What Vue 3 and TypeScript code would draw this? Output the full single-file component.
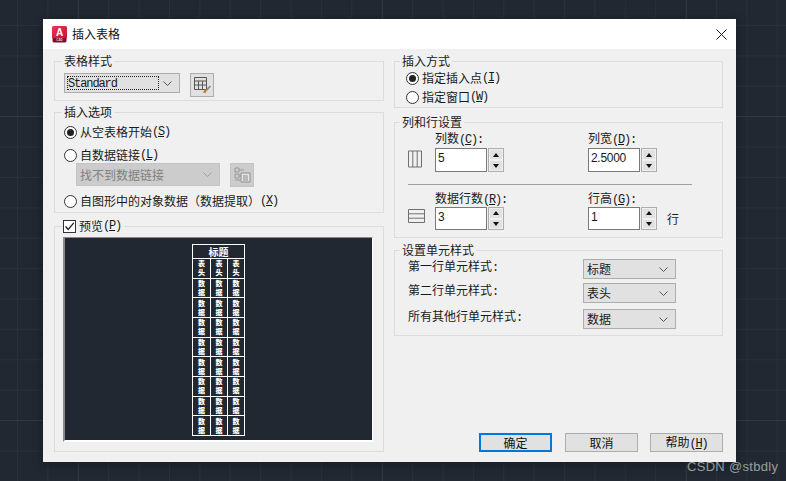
<script setup lang="ts">
interface Row { label: string; text: string }
const rows: Row[] = [
  { label: 'h', text: '表头' },
  ...Array.from({ length: 8 }, (_, i): Row => ({ label: 'd' + i, text: '数据' })),
]
const cellStyles = [
  { title: '第一行单元样式', value: '标题' },
  { title: '第二行单元样式', value: '表头' },
  { title: '所有其他行单元样式', value: '数据' },
]
</script>

<template>
  <div class="canvas">
    <div class="dialog">
      <header class="titlebar">
        <svg class="logo" width="15" height="17" viewBox="0 0 15 17">
          <defs>
            <linearGradient id="lg" x1="0" y1="0" x2="1" y2="1">
              <stop offset="0" stop-color="#f0324f" />
              <stop offset="1" stop-color="#c9123a" />
            </linearGradient>
          </defs>
          <path d="M0 1.5 Q0 0 1.5 0 H13.5 Q15 0 15 1.5 V12 H0Z" fill="url(#lg)" />
          <path d="M0.5 12 H14.5 V15 Q14.5 16.5 13 16.5 H2 Q0.5 16.5 0.5 15Z" fill="#7c1030" />
          <text x="7.5" y="10" text-anchor="middle" font-size="10" font-weight="700" fill="#fff" font-family="Liberation Sans, sans-serif">A</text>
          <text x="7.5" y="15.3" text-anchor="middle" font-size="3" font-weight="700" fill="#f3c9d2" font-family="Liberation Sans, sans-serif">CAD</text>
        </svg>
        <span class="title">插入表格</span>
        <svg class="close" width="11" height="11" viewBox="0 0 11 11">
          <path d="M0.5 0.5 L10.5 10.5 M10.5 0.5 L0.5 10.5" stroke="#1a1a1a" stroke-width="1" fill="none" />
        </svg>
      </header>

      <div class="body">
        <div class="col">
          <section class="group g-style">
            <div class="legend">表格样式</div>
            <div class="style-row">
              <div class="combo c-style">
                <span class="focus"><span class="m std">Standard</span></span>
                <svg class="chev" width="9" height="5" viewBox="0 0 9 5"><path d="M0.5 0.5 L4.5 4.5 L8.5 0.5" fill="none" stroke="#555" /></svg>
              </div>
              <button class="iconbtn">
                <svg width="20" height="20" viewBox="0 0 20 20">
                  <path d="M2.5 2.5 H14.5 V14.5 H2.5 Z M2.5 6 H14.5 M2.5 10 H14.5 M6.5 6 V14.5 M10.5 6 V14.5" fill="none" stroke="#555" />
                  <path d="M11 17.5 L13 14 L15 15.5 L13.5 18 Z" fill="#c47a2a" />
                  <path d="M14 14 L18 10.5 L19 11.5 L15.5 15.5 Z" fill="#8a8a8a" />
                </svg>
              </button>
            </div>
          </section>

          <section class="group g-insert">
            <div class="legend">插入选项</div>
            <label class="radio-row"><span class="radio on"></span>从空表格开始<span class="m">(<u>S</u>)</span></label>
            <label class="radio-row r2"><span class="radio"></span>自数据链接<span class="m">(<u>L</u>)</span></label>
            <div class="link-row">
              <div class="combo disabled c-link">
                <span>找不到数据链接</span>
                <svg class="chev" width="9" height="5" viewBox="0 0 9 5"><path d="M0.5 0.5 L4.5 4.5 L8.5 0.5" fill="none" stroke="#a0a0a0" /></svg>
              </div>
              <button class="iconbtn dis">
                <svg width="20" height="20" viewBox="0 0 20 20">
                  <path d="M3 3 H7 V7 H3 Z M3 9 H7 V13 H3 Z M7 5 H12 M7 11 H9 M3 15 H8" fill="none" stroke="#9a9a9a" />
                  <path d="M9 8 H18 V17 H9 Z" fill="#e4e4e4" stroke="#8e8e8e" />
                  <path d="M11 11 H16 M11 13 H16 M11 15 H16" stroke="#8e8e8e" />
                </svg>
              </button>
            </div>
            <label class="radio-row r3"><span class="radio"></span>自图形中的对象数据（数据提取）<span class="m">(<u>X</u>)</span></label>
          </section>

          <section class="group g-preview">
            <div class="legend check-legend">
              <span class="checkbox">
                <svg width="11" height="11" viewBox="0 0 11 11"><path d="M1.5 5.5 L4.2 8.5 L9.8 1.8" fill="none" stroke="#222" stroke-width="1.3" /></svg>
              </span>
              预览<span class="m">(<u>P</u>)</span>
            </div>
            <div class="preview">
              <div class="table">
                <div class="t-title">标题</div>
                <div v-for="row in rows" :key="row.label" class="t-row">
                  <div v-for="n in 3" :key="n" class="t-cell"><span class="t-text">{{ row.text }}</span></div>
                </div>
              </div>
            </div>
          </section>
        </div>

        <div class="col">
          <section class="group g-method">
            <div class="legend r-legend">插入方式</div>
            <label class="radio-row"><span class="radio on"></span>指定插入点<span class="m">(<u>I</u>)</span></label>
            <label class="radio-row m3"><span class="radio"></span>指定窗口<span class="m">(<u>W</u>)</span></label>
          </section>

          <section class="group g-rows">
            <div class="legend r-legend">列和行设置</div>
            <div class="spin-row">
              <div class="glyph">
                <svg width="14" height="18" viewBox="0 0 14 18"><path d="M0.5 1 H13.5 V17 H0.5 Z M4.8 1 V17 M9.2 1 V17" fill="none" stroke="#707070" /></svg>
              </div>
              <div class="field">
                <div class="f-label">列数<span class="m">(<u>C</u>):</span></div>
                <div class="spin">
                  <div class="input"><span class="num">5</span></div>
                  <div class="arrows"><span class="up"></span><span class="dn"></span></div>
                </div>
              </div>
              <div class="field">
                <div class="f-label">列宽<span class="m">(<u>D</u>):</span></div>
                <div class="spin">
                  <div class="input"><span class="num">2.5000</span></div>
                  <div class="arrows"><span class="up"></span><span class="dn"></span></div>
                </div>
              </div>
            </div>
            <div class="sep"></div>
            <div class="spin-row second">
              <div class="glyph">
                <svg width="17" height="14" viewBox="0 0 17 14"><path d="M0.5 0.5 H16.5 V13.5 H0.5 Z M0.5 4.8 H16.5 M0.5 9.2 H16.5" fill="none" stroke="#707070" /></svg>
              </div>
              <div class="field">
                <div class="f-label">数据行数<span class="m">(<u>R</u>):</span></div>
                <div class="spin">
                  <div class="input"><span class="num">3</span></div>
                  <div class="arrows"><span class="up"></span><span class="dn"></span></div>
                </div>
              </div>
              <div class="field">
                <div class="f-label">行高<span class="m">(<u>G</u>):</span></div>
                <div class="spin">
                  <div class="input"><span class="num">1</span></div>
                  <div class="arrows"><span class="up"></span><span class="dn"></span></div>
                  <span class="unit">行</span>
                </div>
              </div>
            </div>
          </section>

          <section class="group g-cells">
            <div class="legend r-legend">设置单元样式</div>
            <div v-for="c in cellStyles" :key="c.title" class="cell-row">
              <span class="cell-label">{{ c.title }}<span class="m">:</span></span>
              <div class="combo c-cell">
                <span>{{ c.value }}</span>
                <svg class="chev" width="9" height="5" viewBox="0 0 9 5"><path d="M0.5 0.5 L4.5 4.5 L8.5 0.5" fill="none" stroke="#555" /></svg>
              </div>
            </div>
          </section>

          <div class="actions">
            <button class="btn primary">确定</button>
            <button class="btn">取消</button>
            <button class="btn">帮助<span class="m">(<u>H</u>)</span></button>
          </div>
        </div>
      </div>
    </div>
    <div class="watermark">CSDN @stbdly</div>
  </div>
</template>

<style>
html, body { margin: 0; padding: 0; background: #212831; }
</style>

<style scoped>
.canvas {
  position: relative;
  width: 786px;
  height: 481px;
  overflow: hidden;
  padding: 19px 0 0 43px;
  box-sizing: border-box;
  background-color: #212831;
  background-image:
    linear-gradient(to right, #303745 1px, transparent 1px),
    linear-gradient(to bottom, #303745 1px, transparent 1px),
    linear-gradient(to right, #29303b 1px, transparent 1px),
    linear-gradient(to bottom, #29303b 1px, transparent 1px);
  background-size: 304px 304px, 304px 304px, 30.4px 30.4px, 30.4px 30.4px;
  background-position: 78px 0, 0 116px, 17px 0, 0 25px;
  font-family: "Noto Sans CJK SC", "Liberation Sans", sans-serif;
  font-size: 12px;
  color: #1a1a1a;
}
.dialog {
  width: 693px;
  height: 443px;
  background: #f0f0f0;
  box-shadow: 0 2px 10px rgba(0, 0, 0, 0.35);
  display: flex;
  flex-direction: column;
}
.titlebar {
  height: 30px;
  flex: none;
  background: #fff;
  display: flex;
  align-items: center;
  padding-left: 9px;
  box-sizing: border-box;
}
.logo { flex: none; }
.title { margin-left: 5px; line-height: 14px; color: #111; }
.close { margin-left: auto; margin-right: 9px; }
.body {
  flex: 1;
  display: grid;
  grid-template-columns: 330px 329px;
  column-gap: 10px;
  padding: 12px 13px 10px 11px;
  min-height: 0;
}
.col { display: flex; flex-direction: column; min-height: 0; }
.group {
  position: relative;
  border: 1px solid #dcdcdc;
  box-sizing: border-box;
  flex: none;
}
.legend {
  position: absolute;
  top: -9px;
  left: 7px;
  padding: 0 2px;
  background: #f0f0f0;
  line-height: 16px;
  white-space: nowrap;
}
.r-legend { left: 5px; }
.m {
  font-family: "Liberation Mono", monospace;
  font-size: 12px;
  letter-spacing: -1.2px;
}
.std { letter-spacing: -1.1px; }
.num {
  font-family: "Liberation Sans", sans-serif;
  font-size: 12px;
  letter-spacing: -0.3px;
}
u { text-underline-offset: 1px; }

.g-style { height: 40px; padding: 11px 0 0 9px; }
.style-row { display: flex; gap: 10px; align-items: flex-start; }
.combo {
  display: flex;
  align-items: center;
  box-sizing: border-box;
  background: #e1e1e1;
  border: 1px solid #adadad;
  padding-left: 2px;
  height: 20px;
  line-height: 16px;
}
.chev { margin-left: auto; margin-right: 7px; flex: none; }
.c-style { width: 116px; }
.focus {
  border: 1px dotted #222;
  width: 92px;
  height: 14px;
  line-height: 10px;
  box-sizing: border-box;
  padding-left: 0;
  display: block;
}
.iconbtn {
  width: 24px;
  height: 24px;
  padding: 0;
  background: #e1e1e1;
  border: 1px solid #adadad;
  display: flex;
  align-items: center;
  justify-content: center;
}
.iconbtn.dis { background: #cccccc; border-color: #c4c4c4; }

.g-insert { height: 101px; margin-top: 11px; padding: 11px 0 0 9px; }
.radio-row { display: flex; align-items: center; height: 16px; line-height: 16px; white-space: nowrap; }
.radio {
  width: 13px;
  height: 13px;
  box-sizing: border-box;
  border: 1px solid #333;
  border-radius: 50%;
  background: #fff;
  margin-right: 3px;
  flex: none;
  position: relative;
}
.radio.on::after {
  content: "";
  position: absolute;
  inset: 2px;
  border-radius: 50%;
  background: #222;
}
.r2 { margin-top: 7px; }
.r3 { margin-top: 6px; }
.link-row { display: flex; gap: 10px; padding-left: 12px; }
.c-link { width: 144px; height: 23px; padding-left: 3px; }
.disabled { background: #cccccc; border-color: #c4c4c4; color: #808080; }

.g-preview { height: 226px; margin-top: 13px; padding: 10px 0 0 8px; }
.check-legend { display: flex; align-items: center; left: 8px; top: -9px; padding: 0 3px 0 0; }
.checkbox {
  width: 13px;
  height: 13px;
  box-sizing: border-box;
  border: 1px solid #333;
  background: #fff;
  margin-right: 3px;
  display: flex;
  align-items: center;
  justify-content: center;
}
.preview {
  width: 310px;
  height: 205px;
  box-sizing: border-box;
  background: #212831;
  border-top: 1px solid #8a8a8a;
  border-left: 2px solid #8a8a8a;
  border-right: 1px solid #fff;
  border-bottom: 2px solid #fff;
  display: flex;
  justify-content: center;
  padding-top: 6px;
}
.table {
  width: 53px;
  height: 192px;
  box-sizing: border-box;
  border: 1px solid #fff;
  color: #fff;
  display: flex;
  flex-direction: column;
  font-weight: 700;
}
.t-title {
  height: 13px;
  line-height: 13px;
  font-size: 10px;
  text-align: center;
  flex: none;
}
.t-row {
  flex: 1 1 0;
  min-height: 0;
  display: grid;
  grid-template-columns: 1fr 1fr 1fr;
  border-top: 1px solid #fff;
}
.t-cell {
  display: flex;
  align-items: center;
  justify-content: center;
  min-height: 0;
  border-left: 1px solid #fff;
}
.t-cell:first-child { border-left: 0; }
.t-text {
  display: block;
  width: 7px;
  font-size: 7px;
  line-height: 9px;
  font-weight: 900;
}

.g-method { height: 47px; padding: 8px 0 0 11px; }
.m3 { margin-top: 3px; }
.g-rows { height: 116px; margin-top: 14px; padding: 8px 0 0 13px; }
.spin-row { display: flex; }
.glyph {
  width: 27px;
  height: 39px;
  flex: none;
  display: flex;
  align-items: flex-end;
  padding-bottom: 2px;
  box-sizing: border-box;
}
.field { width: 153px; flex: none; }
.field:last-child { width: auto; }
.f-label { height: 14px; line-height: 14px; margin-bottom: 3px; white-space: nowrap; }
.spin { display: flex; height: 24px; align-items: stretch; }
.input {
  width: 52px;
  box-sizing: border-box;
  background: #fff;
  border: 1px solid #7a7a7a;
  padding: 0 0 0 2px;
  line-height: 16px;
}
.arrows {
  width: 16px;
  margin-left: 1px;
  display: flex;
  flex-direction: column;
  box-sizing: border-box;
  border: 1px solid #adadad;
  background: #f0f0f0;
  padding: 1px;
  gap: 2px;
}
.up, .dn {
  flex: 1;
  background: #e1e1e1;
  position: relative;
}
.up::after, .dn::after {
  content: "";
  position: absolute;
  left: 50%;
  top: 50%;
  margin: -2px 0 0 -3.5px;
  border-left: 3.5px solid transparent;
  border-right: 3.5px solid transparent;
}
.up::after { border-bottom: 4px solid #111; }
.dn::after { border-top: 4px solid #111; }
.unit { margin-left: 10px; align-self: center; }
.sep { width: 284px; height: 1px; background: #a0a0a0; margin-top: 12px; }
.second { margin-top: 6px; }
.second .f-label { margin-bottom: 2px; }
.second .spin { height: 23px; }
.second .glyph { height: 37px; padding-bottom: 5px; }

.g-cells { height: 86px; margin-top: 12px; padding: 8px 0 0 13px; }
.cell-row { display: flex; align-items: center; height: 20px; margin-bottom: 4px; }
.cell-row:nth-child(3) { margin-bottom: 6px; }
.cell-label { width: 175px; flex: none; padding-bottom: 4px; line-height: 14px; }
.c-cell { width: 93px; padding-left: 3px; }

.actions {
  margin-top: auto;
  display: flex;
  justify-content: flex-end;
  gap: 12px;
}
.btn {
  width: 73px;
  height: 19px;
  box-sizing: border-box;
  padding: 0;
  background: #e1e1e1;
  border: 1px solid #adadad;
  font: inherit;
  line-height: 16px;
  color: #111;
}
.btn.primary { border: 2px solid #0078d7; line-height: 14px; margin-right: 1px; }

.watermark {
  position: absolute;
  left: 687px;
  top: 459px;
  font-family: "Liberation Sans", sans-serif;
  font-size: 13px;
  line-height: 16px;
  letter-spacing: 0.3px;
  color: rgba(255, 255, 255, 0.55);
  white-space: nowrap;
}
</style>
